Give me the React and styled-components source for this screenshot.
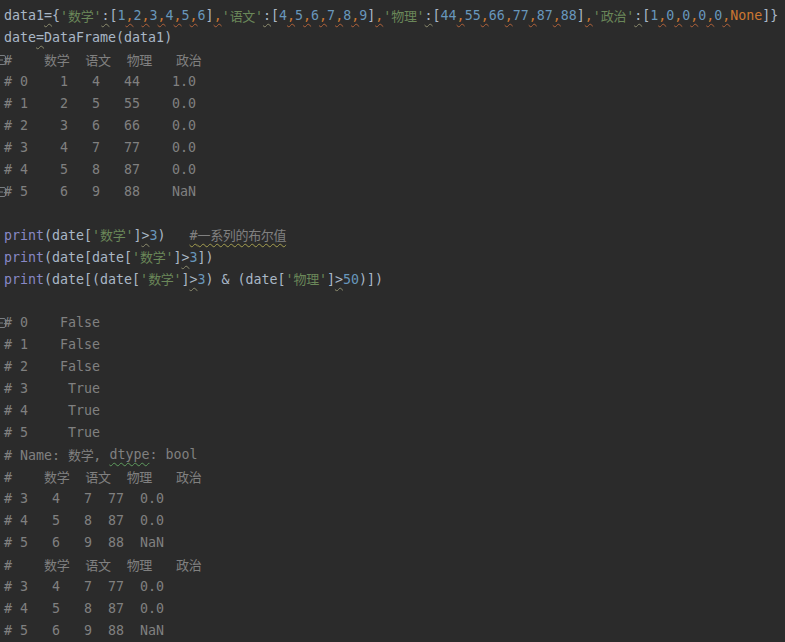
import React from "react";
import styled, { createGlobalStyle, css } from "styled-components";

const Global = createGlobalStyle`
  html, body { margin: 0; padding: 0; background: #2b2b2b; }
  #root { min-height: 100vh; background: #2b2b2b; }
`;

const Editor = styled.div`
  box-sizing: border-box;
  width: 785px;
  height: 642px;
  overflow: hidden;
  background: #2b2b2b;
  padding: 5px 0 0 4px;
  display: flex;
  flex-direction: column;
  font-family: "DejaVu Sans Mono", "Liberation Mono", "Noto Sans CJK SC", monospace;
  font-size: 13.3px;
  color: #a9b7c6;
`;

const Line = styled.div`
  position: relative;
  height: 22px;
  line-height: 22px;
  white-space: pre;
  display: flex;
  align-items: center;
`;

const FoldMark = styled.svg`
  position: absolute;
  left: -9px;
  top: 6px;
`;

const Cjk = styled.span`
  font-family: "Noto Sans CJK SC", sans-serif;
  font-size: 13px;
  letter-spacing: -0.35px;
`;

const colors = {
  p: "#a9b7c6",
  s: "#6a8759",
  n: "#6897bb",
  k: "#cc7832",
  c: "#cc7832",
  b: "#8888c6",
  m: "#808080",
};

const wavy = (c) => css`
  text-decoration-line: underline;
  text-decoration-style: wavy;
  text-decoration-color: ${c};
  text-decoration-thickness: 1px;
  text-underline-offset: 3px;
`;

const Tok = styled.span`
  color: ${(p) => colors[p.$kind] || colors.p};
  ${(p) => p.$warn && wavy(p.$warn)}
`;

const WARN = "#8d8c6e";
const COMMA_WARN = "#b0623a";

const splitCjk = (text) => {
  const parts = text.split(/([\u3000-\u9fff\uff00-\uffef]+)/);
  return parts.map((s, i) =>
    /[\u3000-\u9fff\uff00-\uffef]/.test(s) ? <Cjk key={i}>{s}</Cjk> : s
  );
};

// token helpers
const P = (t) => ["p", t];
const S = (t) => ["s", t];
const N = (t) => ["n", t];
const K = (t) => ["k", t];
const C = () => ["c", ",", COMMA_WARN];
const B = (t) => ["b", t];
const M = (t, w) => ["m", t, w];
const W = (t) => ["p", t, WARN];

const list = (nums) => {
  const out = [];
  nums.forEach((n, i) => {
    out.push(n === "None" ? K(n) : N(n));
    if (i < nums.length - 1) out.push(C());
  });
  return out;
};

const header = "#    数学  语文  物理   政治";

const lines = [
  {
    toks: [
      P("data1"), W("="), P("{"),
      S("'数学'"), W(":"), P("["), ...list(["1", "2", "3", "4", "5", "6"]), P("]"), C(),
      S("'语文'"), W(":"), P("["), ...list(["4", "5", "6", "7", "8", "9"]), P("]"), C(),
      S("'物理'"), W(":"), P("["), ...list(["44", "55", "66", "77", "87", "88"]), P("]"), C(),
      S("'政治'"), W(":"), P("["), ...list(["1", "0", "0", "0", "0", "None"]), P("]}"),
    ],
  },
  { toks: [P("date"), W("="), P("DataFrame(data1)")] },
  { toks: [M(header)], fold: true },
  { toks: [M("# 0    1   4   44    1.0")] },
  { toks: [M("# 1    2   5   55    0.0")] },
  { toks: [M("# 2    3   6   66    0.0")] },
  { toks: [M("# 3    4   7   77    0.0")] },
  { toks: [M("# 4    5   8   87    0.0")] },
  { toks: [M("# 5    6   9   88    NaN")], fold: true },
  { toks: [] },
  {
    toks: [
      B("print"), P("(date["), S("'数学'"), P("]"), W(">"), N("3"), P(")"),
      P("   "), M("#一系列的布尔值", "#a39e4f"),
    ],
  },
  {
    toks: [
      B("print"), P("(date[date["), S("'数学'"), P("]"), W(">"), N("3"), P("])"),
    ],
  },
  {
    toks: [
      B("print"), P("(date[(date["), S("'数学'"), P("]"), W(">"), N("3"), P(") & (date["),
      S("'物理'"), P("]"), W(">"), N("50"), P(")])"),
    ],
  },
  { toks: [] },
  { toks: [M("# 0    False")], fold: true },
  { toks: [M("# 1    False")] },
  { toks: [M("# 2    False")] },
  { toks: [M("# 3     True")] },
  { toks: [M("# 4     True")] },
  { toks: [M("# 5     True")] },
  { toks: [M("# Name: 数学, "), M("dtype", "#5e9c5e"), M(": bool")] },
  { toks: [M(header)] },
  { toks: [M("# 3   4   7  77  0.0")] },
  { toks: [M("# 4   5   8  87  0.0")] },
  { toks: [M("# 5   6   9  88  NaN")] },
  { toks: [M(header)] },
  { toks: [M("# 3   4   7  77  0.0")] },
  { toks: [M("# 4   5   8  87  0.0")] },
  { toks: [M("# 5   6   9  88  NaN")] },
];

const Fold = () => (
  <FoldMark width="12" height="11" viewBox="0 0 12 11">
    <rect x="1.5" y="0.5" width="9" height="9" rx="1.5" fill="none" stroke="#7a7e82" strokeWidth="1" />
    <line x1="4" y1="5" x2="8" y2="5" stroke="#7a7e82" strokeWidth="1" />
  </FoldMark>
);

export default function App() {
  return (
    <>
      <Global />
      <Editor>
        {lines.map((ln, i) => (
          <Line key={i}>
            {ln.fold && <Fold />}
            {ln.toks.map(([kind, text, warn], j) => (
              <Tok key={j} $kind={kind} $warn={warn}>
                {splitCjk(text)}
              </Tok>
            ))}
          </Line>
        ))}
      </Editor>
    </>
  );
}
